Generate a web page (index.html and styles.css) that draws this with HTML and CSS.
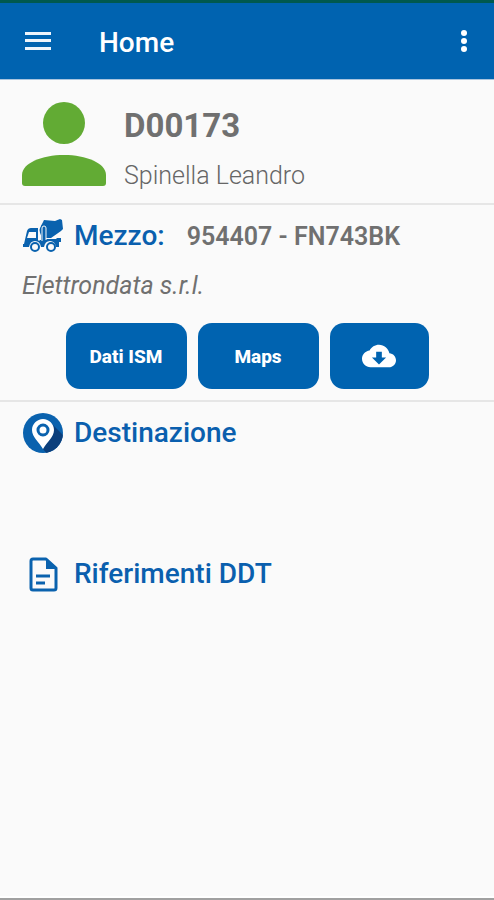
FILE: index.html
```html
<!DOCTYPE html>
<html lang="it">
<head>
<meta charset="utf-8">
<meta name="viewport" content="width=device-width, initial-scale=1">
<title>Home</title>
<link rel="stylesheet" href="styles.css">
</head>
<body>
<header class="app-bar">
  <button class="icon-button" type="button" aria-label="Menu">
    <svg width="26" height="18" viewBox="0 0 26 18" fill="#eef5fc"><path d="M0 0h26v3H0zM0 7h26v3H0zM0 15h26v3H0z"/></svg>
  </button>
  <h1 class="app-title">Home</h1>
  <button class="icon-button" type="button" aria-label="Altre opzioni">
    <svg width="8" height="24" viewBox="0 0 8 24" fill="#fff"><circle cx="4" cy="4" r="3"/><circle cx="4" cy="12" r="3"/><circle cx="4" cy="20" r="3"/></svg>
  </button>
</header>
<main class="content">
  <section class="profile">
    <svg class="avatar" width="84" height="84" viewBox="0 0 84 84" fill="#62ab34"><circle cx="42" cy="21" r="21"/><path d="M0 73C0 61 20 53 42 53s42 8 42 20v8q0 3-3 3H3q-3 0-3-3z"/></svg>
    <div class="profile-text">
      <h2 class="code">D00173</h2>
      <p class="name">Spinella Leandro</p>
    </div>
  </section>
  <section class="vehicle">
    <div class="heading-row">
      <svg class="icon" width="42" height="40" viewBox="0 0 42 40">
        <path fill="#0a62ae" d="M17 14l5-10 11 1 5-2 2 1 1 9-2 2-10 7h-9z"/>
        <path fill="#0a62ae" fill-rule="evenodd" d="M1 28h1l3-13q1-3 4-3h7v12h3V11q0-3 3-3 2 0 2 3v12h10l1-1h4v4h-2v5h-3q-1-6-6-6-5 0-6 6h-3q-1-6-6-6-5 0-6 6H1zM7 16L5 22h9v-6z"/>
        <path fill="none" stroke="#fafafa" d="M17 12v13M20 25V12q0-2 2-2t2 2v12"/>
        <circle cx="13" cy="31" r="4" fill="#fafafa" stroke="#0a62ae" stroke-width="2"/>
        <circle cx="29" cy="31" r="4" fill="#fafafa" stroke="#0a62ae" stroke-width="2"/>
      </svg>
      <h2 class="heading">Mezzo:</h2>
      <span class="plate">954407 - FN743BK</span>
    </div>
    <p class="company">Elettrondata s.r.l.</p>
    <div class="actions">
      <button class="action" type="button">Dati ISM</button>
      <button class="action" type="button">Maps</button>
      <button class="action action-small" type="button" aria-label="Scarica">
        <svg width="34" height="34" viewBox="0 0 24 24" fill="#fff"><path d="M19.35 10.04C18.67 6.59 15.64 4 12 4 9.11 4 6.6 5.64 5.35 8.04 2.34 8.36 0 10.91 0 14c0 3.31 2.69 6 6 6h13c2.76 0 5-2.24 5-5 0-2.64-2.05-4.78-4.65-4.96zM17 13l-5 5-5-5h3V9h4v4h3z"/></svg>
      </button>
    </div>
  </section>
  <section class="destination">
    <div class="heading-row">
      <svg class="icon" width="42" height="42" viewBox="0 0 42 42">
        <defs><clipPath id="disc"><circle cx="21" cy="21" r="20"/></clipPath></defs>
        <circle cx="21" cy="21" r="20" fill="#0a62ae"/>
        <path clip-path="url(#disc)" fill="#0b3f7c" d="M29 11l14 14v18H26l-5-6z"/>
        <path fill="#fff" d="M21 7c-6 0-11 5-11 11 0 7 7 12 11 19 4-7 11-12 11-19 0-6-5-11-11-11z"/>
        <circle cx="21" cy="18" r="5" fill="#fff" stroke="#0a62ae" stroke-width="3"/>
      </svg>
      <h2 class="heading">Destinazione</h2>
    </div>
  </section>
  <section class="documents">
    <div class="heading-row">
      <svg class="icon" width="42" height="42" viewBox="0 0 42 42">
        <path fill="none" stroke="#0a62ae" stroke-width="3" stroke-linejoin="round" d="M11 6h13l10 9v20q0 2-2 2H11q-2 0-2-2V8q0-2 2-2z"/>
        <path fill="#0a62ae" d="M24 6l10 10H24z"/>
        <path stroke="#0a62ae" stroke-width="3" d="M14 23h14M14 30h9"/>
      </svg>
      <h2 class="heading">Riferimenti DDT</h2>
    </div>
  </section>
</main>
</body>
</html>
```
FILE: styles.css
```css
* {
  box-sizing: border-box;
}

body {
  margin: 0;
  min-height: 100vh;
  display: flex;
  flex-direction: column;
  background: #fafafa;
  color: #707070;
  font-family: Roboto, "Liberation Sans", sans-serif;
  border-bottom: 2px solid #a0a0a0;
}

h1, h2, p {
  margin: 0;
}

.app-bar {
  display: flex;
  align-items: center;
  height: 80px;
  padding: 0 26px 0 25px;
  border-top: 3px solid #00594f;
  border-bottom: 1px solid #a9c4de;
  background: #0063b0;
  color: #fff;
}

.icon-button {
  display: flex;
  padding: 0;
  border: 0;
  background: none;
}

.app-title {
  flex: 1;
  padding: 3px 0 0 48px;
  font-size: 28px;
  font-weight: 500;
  line-height: 32px;
}

.content {
  flex: 1;
  border-bottom: 2px solid #fff;
}

.profile {
  display: flex;
  gap: 18px;
  padding: 22px 22px 13px;
  border-bottom: 2px solid #e6e6e6;
}

.code {
  padding-top: 4px;
  font-size: 33px;
  font-weight: 700;
  line-height: 40px;
}

.name {
  padding-top: 16px;
  color: #666;
  font-size: 25px;
  font-weight: 300;
  line-height: 28px;
}

.vehicle {
  padding: 9px 22px 11px;
  border-bottom: 2px solid #e6e6e6;
}

.heading-row {
  display: flex;
  align-items: center;
  height: 44px;
}

.heading {
  padding-left: 10px;
  color: #0a5fae;
  font-size: 28px;
  font-weight: 500;
  line-height: 32px;
}

.plate {
  padding-left: 22px;
  font-size: 25px;
  font-weight: 600;
}

.company {
  padding: 12px 0 21px;
  font-size: 25px;
  font-style: italic;
  line-height: 32px;
}

.actions {
  display: flex;
  justify-content: center;
  gap: 11px;
}

.action {
  display: flex;
  align-items: center;
  justify-content: center;
  width: 121px;
  height: 66px;
  padding: 0;
  border: 0;
  border-radius: 14px;
  background: #0063b0;
  color: #fff;
  font-family: inherit;
  font-size: 19px;
  font-weight: 800;
}

.action-small {
  width: 99px;
}

.destination {
  padding: 9px 22px 0;
  min-height: 150px;
}

.documents {
  padding: 0 22px;
}
```
